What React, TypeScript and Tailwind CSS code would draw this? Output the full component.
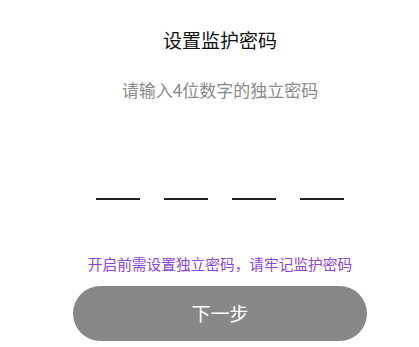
import React from "react";

export default function App() {
  return (
    <div
      className="w-[419px] h-[347px] bg-white overflow-hidden pl-[21px]"
      style={{ fontFamily: '"Noto Sans CJK SC", "Noto Sans", sans-serif' }}
    >
      <div className="flex flex-col items-center">
        <div className="mt-[30px] h-[20px] leading-[20px] text-[19px] font-normal text-[#111111]">
          设置监护密码
        </div>
        <div className="mt-[31px] h-[18px] leading-[18px] text-[17px] text-[#8a8a8a]">
          请输入4位数字的独立密码
        </div>
        <div className="mt-[99px] flex gap-[24px]">
          <div className="w-[44px] h-[2px] bg-[#222]" />
          <div className="w-[44px] h-[2px] bg-[#222]" />
          <div className="w-[44px] h-[2px] bg-[#222]" />
          <div className="w-[44px] h-[2px] bg-[#222]" />
        </div>
        <div className="mt-[56px] h-[16px] leading-[16px] text-[14.7px] text-[#8c46d2]">
          开启前需设置独立密码，请牢记监护密码
        </div>
        <button className="mt-[14px] w-[294px] h-[55px] rounded-full bg-[#888888] text-white text-[19px] flex items-center justify-center">
          下一步
        </button>
      </div>
    </div>
  );
}
